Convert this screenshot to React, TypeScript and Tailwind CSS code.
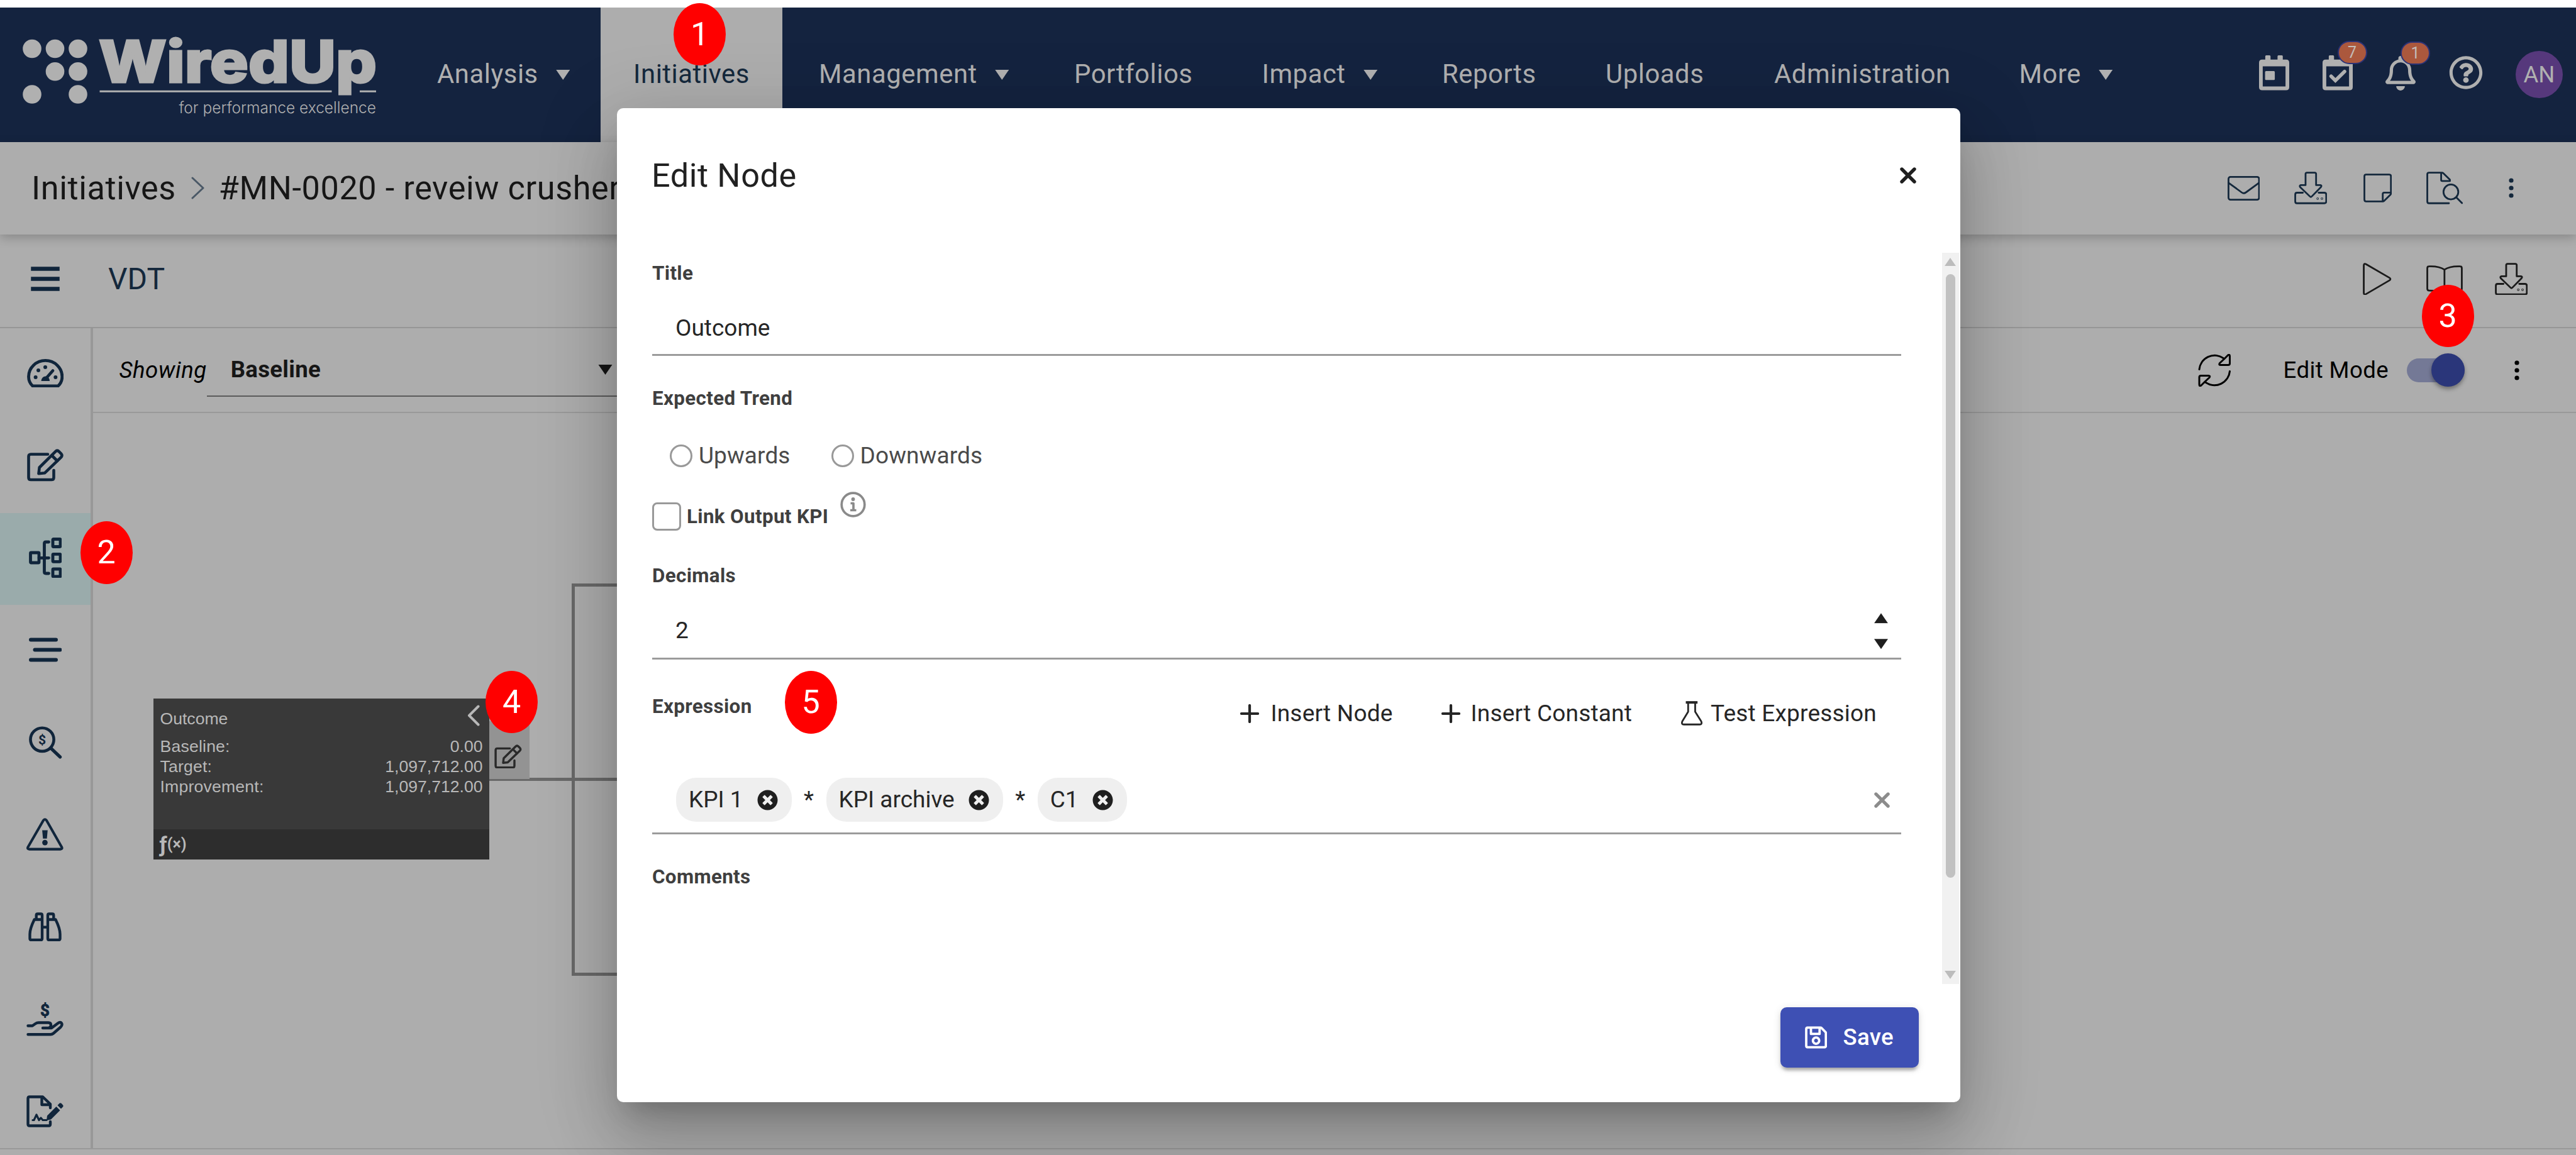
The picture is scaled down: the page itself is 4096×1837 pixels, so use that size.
import type { ReactNode } from 'react';
import { FaRegBell, FaRegQuestionCircle, FaRegSave, FaTimesCircle } from 'react-icons/fa';

interface IconProps {
  className?: string;
}

interface DrawingProps extends IconProps {
  viewBox: string;
  stroke: number;
  children: ReactNode;
}

const Drawing = ({ viewBox, stroke, className, children }: DrawingProps) => (
  <svg
    viewBox={viewBox}
    fill="none"
    stroke="currentColor"
    strokeWidth={stroke}
    strokeLinecap="round"
    strokeLinejoin="round"
    className={className}
  >
    {children}
  </svg>
);

const logoDots = [
  [51, 65.5],
  [87.5, 65.5],
  [124, 65.5],
  [87.5, 101.7],
  [124, 101.7],
  [51, 138],
  [124, 138],
];

const Logo = () => (
  <svg viewBox="0 0 640 214" className="h-[214px] w-[640px]" fill="#b0b0b0">
    {logoDots.map(([cx, cy]) => (
      <circle key={`${cx}-${cy}`} cx={cx} cy={cy} r="14.8" />
    ))}
    <text
      x="157"
      y="119"
      fontSize="92"
      textLength="442"
      lengthAdjust="spacingAndGlyphs"
      stroke="#b0b0b0"
      strokeWidth="3"
      className="font-['Inter',sans-serif] font-extrabold"
    >
      WiredUp
    </text>
    <rect x="158.5" y="131.8" width="369" height="3" />
    <rect x="572" y="131.8" width="26" height="3" />
    <text
      x="284.5"
      y="167.5"
      fontSize="25"
      textLength="313.5"
      lengthAdjust="spacingAndGlyphs"
      className="font-['Inter',sans-serif] font-light"
    >
      for performance excellence
    </text>
  </svg>
);

const Caret = ({ className }: IconProps) => (
  <svg viewBox="0 0 22 16" fill="currentColor" className={className}>
    <path d="M0 0h22L11 16z" />
  </svg>
);

const CalendarIcon = ({ checked }: { checked?: boolean }) => (
  <svg viewBox="0 0 155 179" fill="currentColor" className="h-[55.5px] w-[48px]">
    <path
      fillRule="evenodd"
      d="M16 22h16V5q0-5 5-5h17q5 0 5 5v17h36V5q0-5 5-5h17q5 0 5 5v17h17q16 0 16 16v125q0 16-16 16H16q-16 0-16-16V38q0-16 16-16zM19 56v104h117V56z"
    />
    {checked ? (
      <path d="M44 107l22 22 47-46" fill="none" stroke="currentColor" strokeWidth="18" strokeLinecap="round" />
    ) : (
      <rect x="31" y="81" width="50" height="46" rx="5" />
    )}
  </svg>
);

const EnvelopeIcon = () => (
  <Drawing viewBox="0 0 166 126" stroke={9} className="h-[39px] w-[51.5px]">
    <rect x="4.5" y="4.5" width="157" height="117" rx="10" />
    <path d="M4 34l68 50q11 8 22 0l68-50" />
  </Drawing>
);

const DownloadIcon = () => (
  <Drawing viewBox="0 0 169 167" stroke={9} className="h-[51.8px] w-[52.4px]">
    <path d="M44 108H14q-9 0-9 10v35q0 9 9 9h141q9 0 9-9v-35q0-10-9-10h-30" />
    <path d="M65 5h40q7 0 7 7v57h22q9 2 3 10l-47 48q-5 5-10 0L30 79q-5-8 4-10h24V12q0-7 7-7z" />
    <circle cx="120" cy="138" r="1.5" />
    <circle cx="142" cy="138" r="1.5" />
  </Drawing>
);

const NoteIcon = () => (
  <Drawing viewBox="0 0 146 148" stroke={9} className="h-[46px] w-[45.3px]">
    <path d="M14 5h118q9 0 9 9v88q0 4-3 7l-32 31q-3 3-7 3H14q-9 0-9-9V14q0-9 9-9z" />
    <path d="M140 98h-34q-7 0-7 7v36" />
  </Drawing>
);

const FileSearchIcon = () => (
  <Drawing viewBox="0 0 188 167" stroke={9} className="h-[51.8px] w-[58.3px]">
    <path d="M116 162H14q-9 0-9-9V14q0-9 9-9h66q4 0 7 3l34 33v7H82q-6 0-6-6V6" />
    <circle cx="126" cy="104" r="38" />
    <path d="M154 132l29 29" />
  </Drawing>
);

const PlayIcon = () => (
  <Drawing viewBox="0 0 147 167" stroke={9} className="h-[51.8px] w-[45.6px]">
    <path d="M5 14Q5 1 17 7l120 70q9 6 0 13L17 160q-12 6-12-7z" />
  </Drawing>
);

const BookIcon = () => (
  <Drawing viewBox="0 0 187 140" stroke={9} className="h-[43.5px] w-[58px]">
    <path d="M14 5q52-2 79 17 27-19 80-17 9 0 9 10v104q0 10-9 10-53 0-80 7-27-7-79-7-9 0-9-10V15q0-10 9-10zM93 22v112" />
  </Drawing>
);

const RefreshIcon = () => (
  <Drawing viewBox="0 0 52.5 52" stroke={3} className="h-[52px] w-[52.5px]">
    <path d="M2 24.5A24.500 24.500 0 0 1 40 6.500l1.500 1.500 6-6q3-2 3 1.500V15q0 2.500-2.500 2.500H36q-3.500 0-1.500-3l7-6.500" />
    <path d="M50.500 27.500A24.500 24.500 0 0 1 12.500 45.500l-1.500-1.500-6 6q-3 2-3-1.500V37q0-2.500 2.500-2.500h12q3.500 0 1.500 3l-7 6.500" />
  </Drawing>
);

const MoreDots = () => (
  <svg viewBox="0 0 8 32" fill="currentColor" className="h-[32px] w-[8px]">
    <circle cx="4" cy="4" r="3.6" />
    <circle cx="4" cy="16" r="3.6" />
    <circle cx="4" cy="28" r="3.6" />
  </svg>
);

const GaugeIcon = () => (
  <Drawing viewBox="0 0 58.3 45.5" stroke={4.8} className="h-[45.5px] w-[58.3px]">
    <path d="M9 43C4.5 39 2.5 33 2.5 28a26.6 25.5 0 0 1 53.3 0c0 5-2 11-6.5 15z" />
    <path d="M30 31L41 18.5" />
    <g fill="currentColor" stroke="none">
      <path d="M22.5 35q1-7.5 7-7.5t6.5 7.5z" />
      <circle cx="13.6" cy="28.9" r="3" />
      <circle cx="18" cy="18" r="3" />
      <circle cx="29" cy="13" r="3" />
      <circle cx="45.3" cy="28.9" r="3" />
    </g>
  </Drawing>
);

const EditIcon = ({ className }: IconProps) => (
  <Drawing viewBox="0 0 58.3 51.5" stroke={4.6} className={className}>
    <path d="M33 8.5H6q-3.5 0-3.5 3.5v33.5q0 3.5 3.5 3.5h33q3.5 0 3.5-3.5V34" />
    <path d="M18.5 39.2l1.2-9.7L45 4.3q3-3 6 0l3 3q3 3 0 6L28.3 38.2z" />
    <path d="M39.5 10.5l8.5 8.5" />
  </Drawing>
);

const TreeIcon = () => (
  <Drawing viewBox="0 0 52.4 64.6" stroke={4.8} className="h-[64.6px] w-[52.4px]">
    <rect x="2.5" y="24" width="13.5" height="16" rx="1" />
    <path d="M16 32.3h15.5M31.5 7H27q-2.5 0-2.5 2.5v45q0 2.5 2.5 2.5h4.5" />
    <rect x="38" y="2.5" width="12" height="12" rx="1" />
    <rect x="38" y="26.3" width="12" height="12" rx="1" />
    <rect x="38" y="50" width="12" height="12" rx="1" />
  </Drawing>
);

const StreamIcon = () => (
  <Drawing viewBox="0 0 52.4 39" stroke={6} className="h-[39px] w-[52.4px]">
    <path d="M3 3.5h40M9.5 19.5h40M3 35.5h40" />
  </Drawing>
);

const SearchDollarIcon = () => (
  <Drawing viewBox="0 0 173 168" stroke={15} className="h-[52px] w-[53.7px]">
    <circle cx="71" cy="69" r="60" />
    <path d="M117 114l46 44" strokeWidth="17" />
    <text
      x="71"
      y="93"
      fontSize="68"
      textAnchor="middle"
      fill="currentColor"
      stroke="none"
      className="font-['Roboto',sans-serif] font-bold"
    >
      $
    </text>
  </Drawing>
);

const WarningIcon = () => (
  <Drawing viewBox="0 0 189 167" stroke={13} className="h-[51.8px] w-[58.6px]">
    <path d="M87 12q8-9 16 0l78 137q5 11-7 11H15q-12 0-7-11z" />
    <g fill="currentColor" stroke="none">
      <path d="M81 63h28l-4 43H85z" />
      <circle cx="95" cy="126" r="14" />
    </g>
  </Drawing>
);

const BinocularsIcon = () => (
  <Drawing viewBox="0 0 171 150" stroke={14} className="h-[46.5px] w-[53px]">
    <path d="M31 37Q8 84 8 112v22q0 8 8 8h48q7 0 7-8V37z" />
    <path d="M140 37q23 47 23 75v22q0 8-8 8h-48q-7 0-7-8V37z" />
    <path d="M41 35V15q0-7 7-7h16q7 0 7 7v20M130 35V15q0-7-7-7h-16q-7 0-7 7v20M73 76h25" />
  </Drawing>
);

const HandDollarIcon = () => (
  <Drawing viewBox="0 -8 58.8 68.6" stroke={4.4} className="h-[68.6px] w-[58.8px]">
    <text
      x="29.4"
      y="21.5"
      fontSize="26"
      textAnchor="middle"
      fill="currentColor"
      strokeWidth="0.8"
      className="font-['Roboto',sans-serif] font-bold"
    >
      $
    </text>
    <path d="M2.5 36.5h7l5-3.5q2-1.5 5-1.5H35q4 0 4 4T35 40h-9M35 40h5l10-7.500q4-3 6 0 1.500 3-1.500 6L43 48.500q-2 1.700-4.500 1.700h-36" />
  </Drawing>
);

const FileSignIcon = () => (
  <Drawing viewBox="0 0 58.8 51" stroke={4.4} className="h-[51px] w-[58.8px]">
    <path d="M38 42v4q0 2.500-2.500 2.500H5q-2.500 0-2.500-2.500V5q0-2.500 2.500-2.500h21L38 14v6M24.500 3v12H37" />
    <path d="M10 39.500h2l4-8.500 4 8.500 3-3.500 3 3.500h6" strokeWidth="3.2" />
    <path
      d="M33 32.500l14.500-14.500 6 6L39 38.500l-7 1.500zM49.500 16l3-3.200q1.500-1.200 3 0l2.500 2.700q1.200 1.500 0 3l-3 3z"
      fill="currentColor"
      stroke="none"
    />
  </Drawing>
);

const FlaskIcon = () => (
  <Drawing viewBox="0 0 109 125" stroke={9} className="h-[38.8px] w-[34px]">
    <path d="M24 7h60" strokeWidth="13" strokeLinecap="butt" />
    <path d="M36 10v45L6 104q-6 16 8 16h81q14 0 8-16L72 55V10" />
  </Drawing>
);

const PlusIcon = () => (
  <Drawing viewBox="0 0 30 30" stroke={4.2} className="h-[30px] w-[30px]">
    <path d="M15 2v26M2 15h26" />
  </Drawing>
);

const CrossIcon = ({ className }: IconProps) => (
  <Drawing viewBox="0 0 26 26" stroke={5.4} className={className}>
    <path d="M3 3l20 20M23 3L3 23" />
  </Drawing>
);

const InfoIcon = () => (
  <Drawing viewBox="0 0 41 41" stroke={3.7} className="h-[41px] w-[41px]">
    <circle cx="20.5" cy="20.5" r="18.3" />
    <circle cx="20.5" cy="12" r="2.9" fill="currentColor" stroke="none" />
    <path d="M16.500 18.500h4.500V29M16 29.500h9.500" strokeLinecap="butt" />
  </Drawing>
);

const navItems = [
  { label: 'Analysis', width: 'w-[260px]', caret: true },
  { label: 'Initiatives', width: 'w-[289px] justify-center bg-[#adadad] text-[#14283c] mr-[58px]' },
  { label: 'Management', width: 'w-[406px]', caret: true },
  { label: 'Portfolios', width: 'w-[298.5px]' },
  { label: 'Impact', width: 'w-[286.5px]', caret: true },
  { label: 'Reports', width: 'w-[260px]' },
  { label: 'Uploads', width: 'w-[268px]' },
  { label: 'Administration', width: 'w-[389.5px]' },
  { label: 'More', width: 'w-[200px]', caret: true },
];

const CountBadge = ({ value }: { value: number }) => (
  <span className="absolute -top-[23px] left-[24px] flex h-[37px] w-[47px] items-center justify-center rounded-full border-2 border-[#2b3276] bg-[#ab583d] text-[25px] leading-none text-[#c4bcb8]">
    {value}
  </span>
);

const TopBar = () => (
  <header className="flex h-[214px] shrink-0 bg-[#14233f] text-[#b0b0b0]">
    <div className="w-[695px] shrink-0">
      <Logo />
    </div>
    <nav className="flex text-[41.8px] tracking-[0.55px]">
      {navItems.map((item) => (
        <div key={item.label} className={`flex shrink-0 items-center ${item.width}`}>
          {item.label}
          {item.caret && <Caret className="ml-[28px] h-[16px] w-[22.5px]" />}
        </div>
      ))}
    </nav>
    <div className="ml-auto flex items-center gap-[52.5px] pr-[21px]">
      <div className="mb-[5px]">
        <CalendarIcon />
      </div>
      <div className="relative mb-[5px]">
        <CalendarIcon checked />
        <CountBadge value={7} />
      </div>
      <div className="relative mb-[5px]">
        <FaRegBell className="h-[55px] w-[48px]" />
        <CountBadge value={1} />
      </div>
      <FaRegQuestionCircle className="mb-[6px] h-[55px] w-[54px]" />
      <div className="flex h-[75px] w-[75px] items-center justify-center rounded-full bg-[#56387c] text-[36.5px]">
        AN
      </div>
    </div>
  </header>
);

const IconCell = ({ children }: { children: ReactNode }) => (
  <div className="flex w-[106.5px] justify-center">{children}</div>
);

const Breadcrumb = () => (
  <div className="relative z-10 flex h-[147.5px] shrink-0 items-center bg-[#adadad] pl-[50px] pr-[49.5px] text-[52.2px] tracking-[0.6px] text-[#161616] shadow-[0_5px_16px_rgba(0,0,0,0.22)]">
    <span>Initiatives</span>
    <Drawing viewBox="0 0 21 36" stroke={3} className="ml-[24px] mr-[23px] h-[36px] w-[21px] text-[#4a5866]">
      <path d="M2 2l17 16L2 34" />
    </Drawing>
    <span>#MN-0020 - reveiw crusher</span>
    <div className="ml-auto flex items-center text-[#14283c]">
      <IconCell><EnvelopeIcon /></IconCell>
      <IconCell><DownloadIcon /></IconCell>
      <IconCell><NoteIcon /></IconCell>
      <IconCell><FileSearchIcon /></IconCell>
      <IconCell><MoreDots /></IconCell>
    </div>
  </div>
);

const TitleBar = () => (
  <div className="flex h-[149px] shrink-0 items-center border-b-[2.5px] border-[#969696] pb-[6px] pl-[48.5px] pr-[49.5px] text-[#1a1a1a]">
    <Drawing viewBox="0 0 46 39" stroke={6.5} className="h-[39px] w-[46px] text-[#10253b]">
      <path d="M3.500 3.500h39M3.500 19.500h39M3.500 35.500h39" strokeLinecap="square" />
    </Drawing>
    <span className="ml-[77.5px] text-[48px] text-[#14283c]">VDT</span>
    <div className="ml-auto flex items-center">
      <IconCell><PlayIcon /></IconCell>
      <IconCell><BookIcon /></IconCell>
      <IconCell><DownloadIcon /></IconCell>
    </div>
  </div>
);

const sidebarIcons = [
  { id: 'dashboard', icon: <GaugeIcon /> },
  { id: 'edit', icon: <EditIcon className="h-[51.5px] w-[58.3px]" /> },
  { id: 'tree', icon: <TreeIcon />, active: true },
  { id: 'stream', icon: <StreamIcon /> },
  { id: 'benefits', icon: <SearchDollarIcon /> },
  { id: 'risks', icon: <WarningIcon /> },
  { id: 'watch', icon: <BinocularsIcon /> },
  { id: 'funding', icon: <HandDollarIcon /> },
  { id: 'signoff', icon: <FileSignIcon /> },
];

const Sidebar = () => (
  <aside className="flex w-[147.5px] shrink-0 flex-col border-r-4 border-[#989898] text-[#10253b]">
    {sidebarIcons.map(({ id, icon, active }) => (
      <div
        key={id}
        className={`flex h-[146.8px] shrink-0 items-center justify-center pb-[4px] ${active ? 'bg-[#9aabab]' : ''}`}
      >
        {icon}
      </div>
    ))}
  </aside>
);

const Toolbar = () => (
  <div className="flex h-[135px] shrink-0 items-center border-b-2 border-[#999999] pl-[42px] pr-[90px] text-[36.6px] text-black">
    <span className="italic tracking-[0.5px]">Showing</span>
    <div className="flex h-[84px] w-[720px] items-center border-b-[2.5px] border-[#5a5a5a] pl-[38px] font-bold tracking-[0.3px] text-[#161616]">
      Baseline
      <Caret className="ml-[441px] h-[16px] w-[23px]" />
    </div>
    <div className="ml-auto flex items-center">
      <RefreshIcon />
      <span className="ml-[83px] tracking-[0.4px]">Edit Mode</span>
      <div className="ml-[29px] flex h-[38px] w-[92px] items-center justify-end rounded-full bg-[#747996]">
        <div className="h-[53.5px] w-[53.5px] shrink-0 rounded-full bg-[#2a367a] shadow-[0_4px_6px_rgba(0,0,0,0.35)]" />
      </div>
      <div className="ml-[79px]">
        <MoreDots />
      </div>
    </div>
  </div>
);

const nodeRows = [
  { label: 'Baseline:', value: '0.00' },
  { label: 'Target:', value: '1,097,712.00' },
  { label: 'Improvement:', value: '1,097,712.00' },
];

const OutcomeNode = () => (
  <div className="absolute left-[96px] top-[454px] flex h-[256px] w-[534px] flex-col bg-[#393939] font-['Liberation_Sans',Arial,sans-serif] text-[26.6px] leading-[32px] text-[#b8b8b8]">
    <div className="flex items-start justify-between pl-[11px] pr-[15px] pt-[10px]">
      <span className="pt-[6px]">Outcome</span>
      <Drawing viewBox="0 0 20 34" stroke={4} className="h-[34px] w-[20px]">
        <path d="M17.500 2.500L3 17l14.500 14.500" />
      </Drawing>
    </div>
    <div className="mt-[12px] pl-[11px] pr-[10px]">
      {nodeRows.map((row) => (
        <div key={row.label} className="flex justify-between">
          <span className="tracking-[0.2px]">{row.label}</span>
          <span>{row.value}</span>
        </div>
      ))}
    </div>
    <div className="mt-auto flex h-[48px] items-center bg-[#2d2d2d] pl-[10px] font-['Roboto',sans-serif] font-bold">
      <span className="text-[34px]">ƒ</span>
      <span className="text-[25px]">(×)</span>
    </div>
  </div>
);

// Free canvas: node and connectors sit at their own coordinates.
const Canvas = () => (
  <div className="relative grow">
    <div className="absolute left-[630px] top-[579.5px] h-[5px] w-[240px] bg-[#696969]" />
    <div className="absolute left-[761px] top-[271px] h-[624px] w-[240px] border-[5px] border-[#696969]" />
    <div className="absolute left-[630px] top-[490px] flex h-[92px] w-[64px] items-end bg-[#939393] pb-[17px] pl-[8px] text-[#2a2a2a]">
      <EditIcon className="h-[38.5px] w-[44px]" />
    </div>
    <OutcomeNode />
  </div>
);

const Label = ({ children, className }: { children: ReactNode; className?: string }) => (
  <div className={`flex items-center text-[31.35px] font-bold tracking-[0.35px] text-[#3f3f3f] ${className}`}>
    {children}
  </div>
);

const Radio = ({ label, className }: { label: string; className?: string }) => (
  <div className={`flex items-center text-[#4a4a4a] ${className}`}>
    <span className="h-[36px] w-[36px] rounded-full border-[3.5px] border-[#999999]" />
    <span className="ml-[10px] tracking-[0.1px]">{label}</span>
  </div>
);

const Chip = ({ label }: { label: string }) => (
  <span className="flex h-[70px] items-center gap-[22px] rounded-[32px] bg-[#efefef] pl-[20px] pr-[22px]">
    {label}
    <FaTimesCircle className="h-[33px] w-[33px] text-[#1f1f1f]" />
  </span>
);

const EditNodeDialog = () => (
  <div className="absolute left-[981px] top-[171.5px] z-20 flex h-[1581.5px] w-[2135.5px] flex-col rounded-[10px] bg-white text-[37px] text-[#262626] shadow-[0_29px_39px_-18px_rgba(0,0,0,0.2),0_63px_99px_8px_rgba(0,0,0,0.14),0_24px_120px_21px_rgba(0,0,0,0.12)]">
    <div className="flex h-[230.5px] items-center justify-between pb-[15px] pl-[55px] pr-[70px]">
      <h2 className="text-[52.2px] tracking-[0.6px] text-[#212121]">Edit Node</h2>
      <CrossIcon className="h-[26px] w-[26px] text-[#1f1f1f]" />
    </div>
    <div className="flex h-[1163px] justify-between pl-[56px] pr-[2px]">
      <div className="w-[1986px]">
        <Label className="h-[66px]">Title</Label>
        <div className="flex h-[97.5px] items-center border-b-[3px] border-[#9b9b9b] pl-[37px] pt-[13px]">Outcome</div>
        <Label className="h-[135.5px]">Expected Trend</Label>
        <div className="flex h-[48px] items-center pl-[28px]">
          <Radio label="Upwards" />
          <Radio label="Downwards" className="ml-[65px]" />
        </div>
        <Label className="h-[145px]">
          <span className="mr-[9px] h-[45px] w-[46px] rounded-[8px] border-[3.5px] border-[#999999]" />
          Link Output KPI
          <span className="mb-[38px] ml-[19px] text-[#8a8a8a]">
            <InfoIcon />
          </span>
        </Label>
        <Label className="h-[44px]">Decimals</Label>
        <div className="flex h-[111px] items-center justify-between border-b-[3px] border-[#9b9b9b] pl-[37px] pr-[21px] pt-[23px]">
          2
          <div className="flex flex-col gap-[25px] text-[#1f1f1f]">
            <Caret className="h-[16.5px] w-[22px] rotate-180" />
            <Caret className="h-[16.5px] w-[22px]" />
          </div>
        </div>
        <div className="flex h-[171.5px] items-center pr-[39px] tracking-[0.2px]">
          <Label className="mb-[22px] mr-auto">Expression</Label>
          <PlusIcon />
          <span className="ml-[18px] mr-[77px]">Insert Node</span>
          <PlusIcon />
          <span className="ml-[17px] mr-[78px]">Insert Constant</span>
          <FlaskIcon />
          <span className="ml-[13px]">Test Expression</span>
        </div>
        <div className="flex h-[106px] items-center gap-[19.5px] border-b-[3px] border-[#9b9b9b] pl-[38px] pr-[18px]">
          <Chip label="KPI 1" />
          <span>*</span>
          <Chip label="KPI archive" />
          <span>*</span>
          <Chip label="C1" />
          <CrossIcon className="ml-auto h-[25px] w-[25px] text-[#8c8c8c]" />
        </div>
        <Label className="h-[137px]">Comments</Label>
      </div>
      <div className="flex w-[27px] flex-col items-center bg-[#f1f1f1] py-[8px] text-[#bcbcbc]">
        <Caret className="h-[13px] w-[18px] rotate-180" />
        <div className="mt-[13px] h-[960px] w-[15px] rounded-full bg-[#c1c1c1]" />
        <Caret className="mt-auto h-[13px] w-[18px]" />
      </div>
    </div>
    <div className="flex grow items-start justify-end pr-[66px] pt-[37px]">
      <button className="flex h-[95.5px] w-[220px] items-center justify-center rounded-[10px] bg-[#3e50b4] text-[36.6px] font-medium tracking-[0.3px] text-white shadow-[0_8px_5px_-5px_rgba(0,0,0,0.2),0_5px_5px_rgba(0,0,0,0.14),0_2px_13px_rgba(0,0,0,0.12)]">
        <FaRegSave className="mr-[25px] h-[40px] w-[35.3px]" />
        Save
      </button>
    </div>
  </div>
);

const steps = [
  { step: 1, position: 'left-[1071px] top-[4.5px]' },
  { step: 2, position: 'left-[127.5px] top-[829px]' },
  { step: 3, position: 'left-[3850.5px] top-[452.5px]' },
  { step: 4, position: 'left-[772px] top-[1066.5px]' },
  { step: 5, position: 'left-[1247.5px] top-[1067px]' },
];

export default function App() {
  return (
    <div className="relative flex h-[1837px] w-[4096px] flex-col overflow-hidden bg-[#adadad] pt-[11.5px] font-['Roboto',sans-serif] leading-tight">
      <div className="absolute inset-x-0 top-0 h-[11.5px] bg-white" />
      <TopBar />
      <Breadcrumb />
      <TitleBar />
      <div className="mb-[9px] flex min-h-0 grow border-b-[2.5px] border-[#999999]">
        <Sidebar />
        <main className="flex grow flex-col">
          <Toolbar />
          <Canvas />
        </main>
      </div>
      <EditNodeDialog />
      {steps.map(({ step, position }) => (
        <div
          key={step}
          className={`absolute z-30 flex h-[99.5px] w-[83px] items-center justify-center rounded-[50%] bg-[#ff0000] text-[52px] text-white ${position}`}
        >
          {step}
        </div>
      ))}
    </div>
  );
}
